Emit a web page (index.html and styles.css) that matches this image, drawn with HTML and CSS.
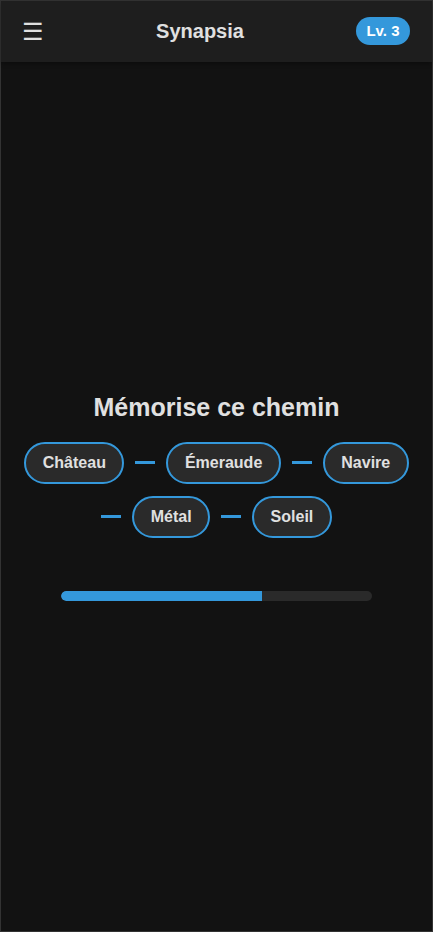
FILE: index.html
```html
<!DOCTYPE html>
<html lang="fr">
<head>
<meta charset="utf-8">
<title>Synapsia</title>
<link rel="stylesheet" href="styles.css">
</head>
<body>
<div class="app">
  <header class="topbar">
    <span class="menu">☰</span>
    <span class="brand">Synapsia</span>
    <span class="level">Lv. 3</span>
  </header>
  <main class="stage">
    <h1 class="prompt">Mémorise ce chemin</h1>
    <div class="path">
      <span class="node">Château</span>
      <span class="link"></span>
      <span class="node">Émeraude</span>
      <span class="link"></span>
      <span class="node">Navire</span>
      <span class="link"></span>
      <span class="node">Métal</span>
      <span class="link"></span>
      <span class="node">Soleil</span>
    </div>
    <div class="timer"><div class="timer-fill" style="width:64.6%"></div></div>
  </main>
</div>
</body>
</html>
```
FILE: styles.css
```css
* { box-sizing: border-box; }
html, body { margin: 0; padding: 0; height: 100%; }
body {
  background: #121212;
  font-family: "Liberation Sans", Arial, sans-serif;
  color: #e0e0e0;
}
.app {
  height: 932px;
  border: 1px solid #333;
  display: flex;
  flex-direction: column;
  background: #121212;
}
.topbar {
  height: 61px;
  flex: none;
  background: #1e1e1e;
  display: flex;
  align-items: center;
  justify-content: space-between;
  padding: 0 22px 0 21px;
  box-shadow: 0 2px 4px rgba(0,0,0,0.3);
}
.menu {
  font-size: 24px;
  line-height: 1;
  color: #e0e0e0;
}
.brand {
  font-size: 20px;
  font-weight: bold;
}
.level {
  background: #3498db;
  color: #fff;
  font-weight: bold;
  font-size: 15px;
  padding: 6px 10px;
  border-radius: 14px;
  line-height: 16px;
  margin-top: -1px;
  min-width: 54px;
  text-align: center;
}
.stage {
  flex: 1;
  display: flex;
  flex-direction: column;
  align-items: center;
  justify-content: center;
  padding: 0 20px;
}
.prompt {
  margin: 0 0 20px;
  font-size: 25px;
  font-weight: bold;
  line-height: 29px;
}
.path {
  display: flex;
  flex-wrap: wrap;
  justify-content: center;
  align-items: center;
  gap: 12px 11px;
}
.node {
  background: #2a2a2a;
  border: 2px solid #3498db;
  border-radius: 21px;
  padding: 10px 16.5px;
  font-size: 16px;
  font-weight: bold;
  line-height: 18px;
}
.link {
  width: 20px;
  height: 3px;
  background: #3498db;
}
.timer {
  margin-top: 53px;
  width: 311px;
  height: 10px;
  background: #2a2a2a;
  border-radius: 5px;
  overflow: hidden;
}
.timer-fill {
  height: 100%;
  background: #3498db;
  border-radius: 5px 0 0 5px;
}
```
